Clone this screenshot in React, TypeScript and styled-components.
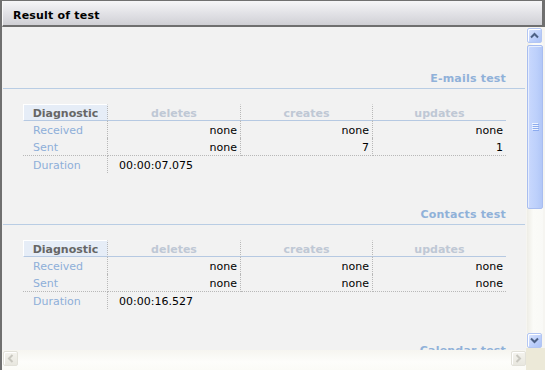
import { FunctionComponent } from 'react'
import styled, { createGlobalStyle } from 'styled-components'

const Global = createGlobalStyle`
  html, body {
    margin: 0;
    padding: 0;
    background: #ffffff;
  }
  body {
    font-family: "DejaVu Sans", Verdana, sans-serif;
    font-size: 11px;
  }
`

const Frame = styled.div`
  width: 545px;
  height: 370px;
  box-sizing: border-box;
  border-top: 1px solid #707070;
  border-left: 2px solid #707070;
  background: #f2f2f2;
  display: flex;
  flex-direction: column;
  overflow: hidden;
`

const Header = styled.div`
  height: 26px;
  flex: none;
  box-sizing: border-box;
  padding: 5px 0 0 10px;
  line-height: 19px;
  font-weight: bold;
  font-size: 11px;
  letter-spacing: 0.2px;
  color: #000;
  background: linear-gradient(#f6f6f8, #e4e4e8 45%, #d0d0d5);
  border-bottom: 2px solid #6f6f6f;
  border-right: 3px solid #6f6f6f;
  border-left: 1px solid #fafafa;
`

const Body = styled.div`
  display: grid;
  grid-template-columns: 524px 19px;
  grid-template-rows: 323px 20px;
`

const Viewport = styled.div`
  overflow: hidden;
  background: #f2f2f2;
  padding-top: 41px;
`

const Section = styled.section`
  margin-bottom: 31px;
`

const SectionTitle = styled.div`
  margin: 0 1px;
  height: 18px;
  padding: 2px 19px 0 0;
  line-height: 18px;
  text-align: right;
  font-weight: bold;
  letter-spacing: 0.2px;
  color: #90b1d9;
  border-bottom: 1px solid #b9cde4;
`

const Table = styled.table`
  margin: 15px 0 0 21px;
  width: 483px;
  table-layout: fixed;
  border-collapse: separate;
  border-spacing: 0;
  font-size: 11px;
`

const HeadCell = styled.th<{ $diag?: boolean; $last?: boolean }>`
  padding: 2px 0 0;
  line-height: 13px;
  text-align: center;
  font-weight: bold;
  color: ${(p) => (p.$diag ? '#666666' : '#bfc8d5')};
  background: ${(p) => (p.$diag ? '#e6edf7' : 'transparent')};
  border-top: 1px solid ${(p) => (p.$diag ? '#ffffff' : 'transparent')};
  border-left: ${(p) => (p.$diag ? '1px solid #ffffff' : 'none')};
  border-bottom: 1px solid #b6c9e2;
  border-right: ${(p) => (p.$last ? 'none' : '1px dotted #b8b8b8')};
`

const Cell = styled.td<{ $last?: boolean; $rule?: boolean }>`
  padding: 2px 3px 0 0;
  line-height: 15px;
  text-align: right;
  color: #000;
  white-space: nowrap;
  border-right: ${(p) => (p.$last ? 'none' : '1px dotted #b8b8b8')};
  border-bottom: ${(p) => (p.$rule ? '1px dotted #b8b8b8' : 'none')};
`

const Label = styled(Cell)`
  text-align: left;
  padding-left: 10px;
  color: #8eafd9;
`

const Duration = styled.td`
  padding: 2px 0 0 11px;
  line-height: 15px;
  text-align: left;
  color: #000;
`

const VScroll = styled.div`
  display: flex;
  flex-direction: column;
  padding: 1px 2px 0 1px;
  background: #f6f5f1;
`

const Btn = styled.div<{ $off?: boolean }>`
  width: 15px;
  height: 15px;
  box-sizing: border-box;
  flex: none;
  display: flex;
  align-items: center;
  justify-content: center;
  border-radius: 2px;
  border: 1px solid ${(p) => (p.$off ? '#e2e1d9' : '#b3c6f3')};
  box-shadow: inset 1px 1px 0 #ffffff;
  background: ${(p) =>
    p.$off
      ? 'linear-gradient(#f4f3ee, #e8e7df)'
      : 'linear-gradient(135deg, #dbe5fd, #bccffb 60%, #adc3f6)'};
`

const Track = styled.div`
  flex: 1;
  padding-top: 2px;
  background: linear-gradient(90deg, #eeede6, #fbfbf8 40%, #f9f9f6);
`

const Thumb = styled.div`
  height: 164px;
  box-sizing: border-box;
  border: 1px solid #a8bdf0;
  border-radius: 2px;
  box-shadow: inset 1px 1px 0 #e6eefe;
  background: linear-gradient(90deg, #c9d8fd, #bdd0fb 60%, #b2c7f7);
  display: flex;
  align-items: center;
  justify-content: center;
`

const BottomFill = styled.div`
  height: 2px;
  margin: 0 -2px 0 -1px;
  background: #ece9d8;
`

const HScroll = styled.div`
  display: flex;
  align-items: flex-start;
  padding: 1px 0 0 1px;
  background: linear-gradient(#f6f5f0, #fdfdfb 60%, #fbfbf7);
`

const HTrack = styled.div`
  flex: 1;
  height: 15px;
`

const Corner = styled.div`
  background: #ece9d8;
`

type Test = {
  title: string
  sent: [string, string, string]
  duration: string
}

const tests: Test[] = [
  { title: 'E-mails test', sent: ['none', '7', '1'], duration: '00:00:07.075' },
  { title: 'Contacts test', sent: ['none', 'none', 'none'], duration: '00:00:16.527' },
  { title: 'Calendar test', sent: ['none', 'none', 'none'], duration: '00:00:03.210' },
]

const Chevron: FunctionComponent<{ dir: 'up' | 'down' | 'left' | 'right'; color: string }> = ({
  dir,
  color,
}) => {
  const rot = { up: 0, right: 90, down: 180, left: 270 }[dir]
  return (
    <svg width="9" height="9" viewBox="0 0 9 9">
      <path
        d="M1 6.5 L4.5 3 L8 6.5"
        fill="none"
        stroke={color}
        strokeWidth="2"
        transform={`rotate(${rot} 4.5 4.5)`}
      />
    </svg>
  )
}

const Grip = () => (
  <svg width="7" height="8" viewBox="0 0 7 8">
    {[0, 2, 4, 6].map((y) => (
      <g key={y}>
        <rect x="0" y={y} width="6" height="1" fill="#eef3fe" />
        <rect x="1" y={y + 1} width="6" height="1" fill="#8cabef" />
      </g>
    ))}
  </svg>
)

const TestTable: FunctionComponent<{ test: Test }> = ({ test }) => (
  <Section>
    <SectionTitle>{test.title}</SectionTitle>
    <Table>
      <colgroup>
        <col style={{ width: 85 }} />
        <col style={{ width: 133 }} />
        <col style={{ width: 132 }} />
        <col style={{ width: 133 }} />
      </colgroup>
      <thead>
        <tr>
          <HeadCell $diag>Diagnostic</HeadCell>
          <HeadCell>deletes</HeadCell>
          <HeadCell>creates</HeadCell>
          <HeadCell $last>updates</HeadCell>
        </tr>
      </thead>
      <tbody>
        <tr>
          <Label>Received</Label>
          <Cell>none</Cell>
          <Cell>none</Cell>
          <Cell $last>none</Cell>
        </tr>
        <tr>
          <Label $rule>Sent</Label>
          {test.sent.map((v, i) => (
            <Cell key={i} $rule $last={i === 2}>
              {v}
            </Cell>
          ))}
        </tr>
        <tr>
          <Label>Duration</Label>
          <Duration colSpan={3}>{test.duration}</Duration>
        </tr>
      </tbody>
    </Table>
  </Section>
)

const App = () => (
  <>
    <Global />
    <Frame>
      <Header>Result of test</Header>
      <Body>
        <Viewport>
          {tests.map((t) => (
            <TestTable key={t.title} test={t} />
          ))}
        </Viewport>
        <VScroll>
          <Btn>
            <Chevron dir="up" color="#4d6185" />
          </Btn>
          <Track>
            <Thumb>
              <Grip />
            </Thumb>
          </Track>
          <Btn>
            <Chevron dir="down" color="#4d6185" />
          </Btn>
          <BottomFill />
        </VScroll>
        <HScroll>
          <Btn $off>
            <Chevron dir="left" color="#c8c7bf" />
          </Btn>
          <HTrack />
          <Btn $off>
            <Chevron dir="right" color="#c8c7bf" />
          </Btn>
        </HScroll>
        <Corner />
      </Body>
    </Frame>
  </>
)

export default App
